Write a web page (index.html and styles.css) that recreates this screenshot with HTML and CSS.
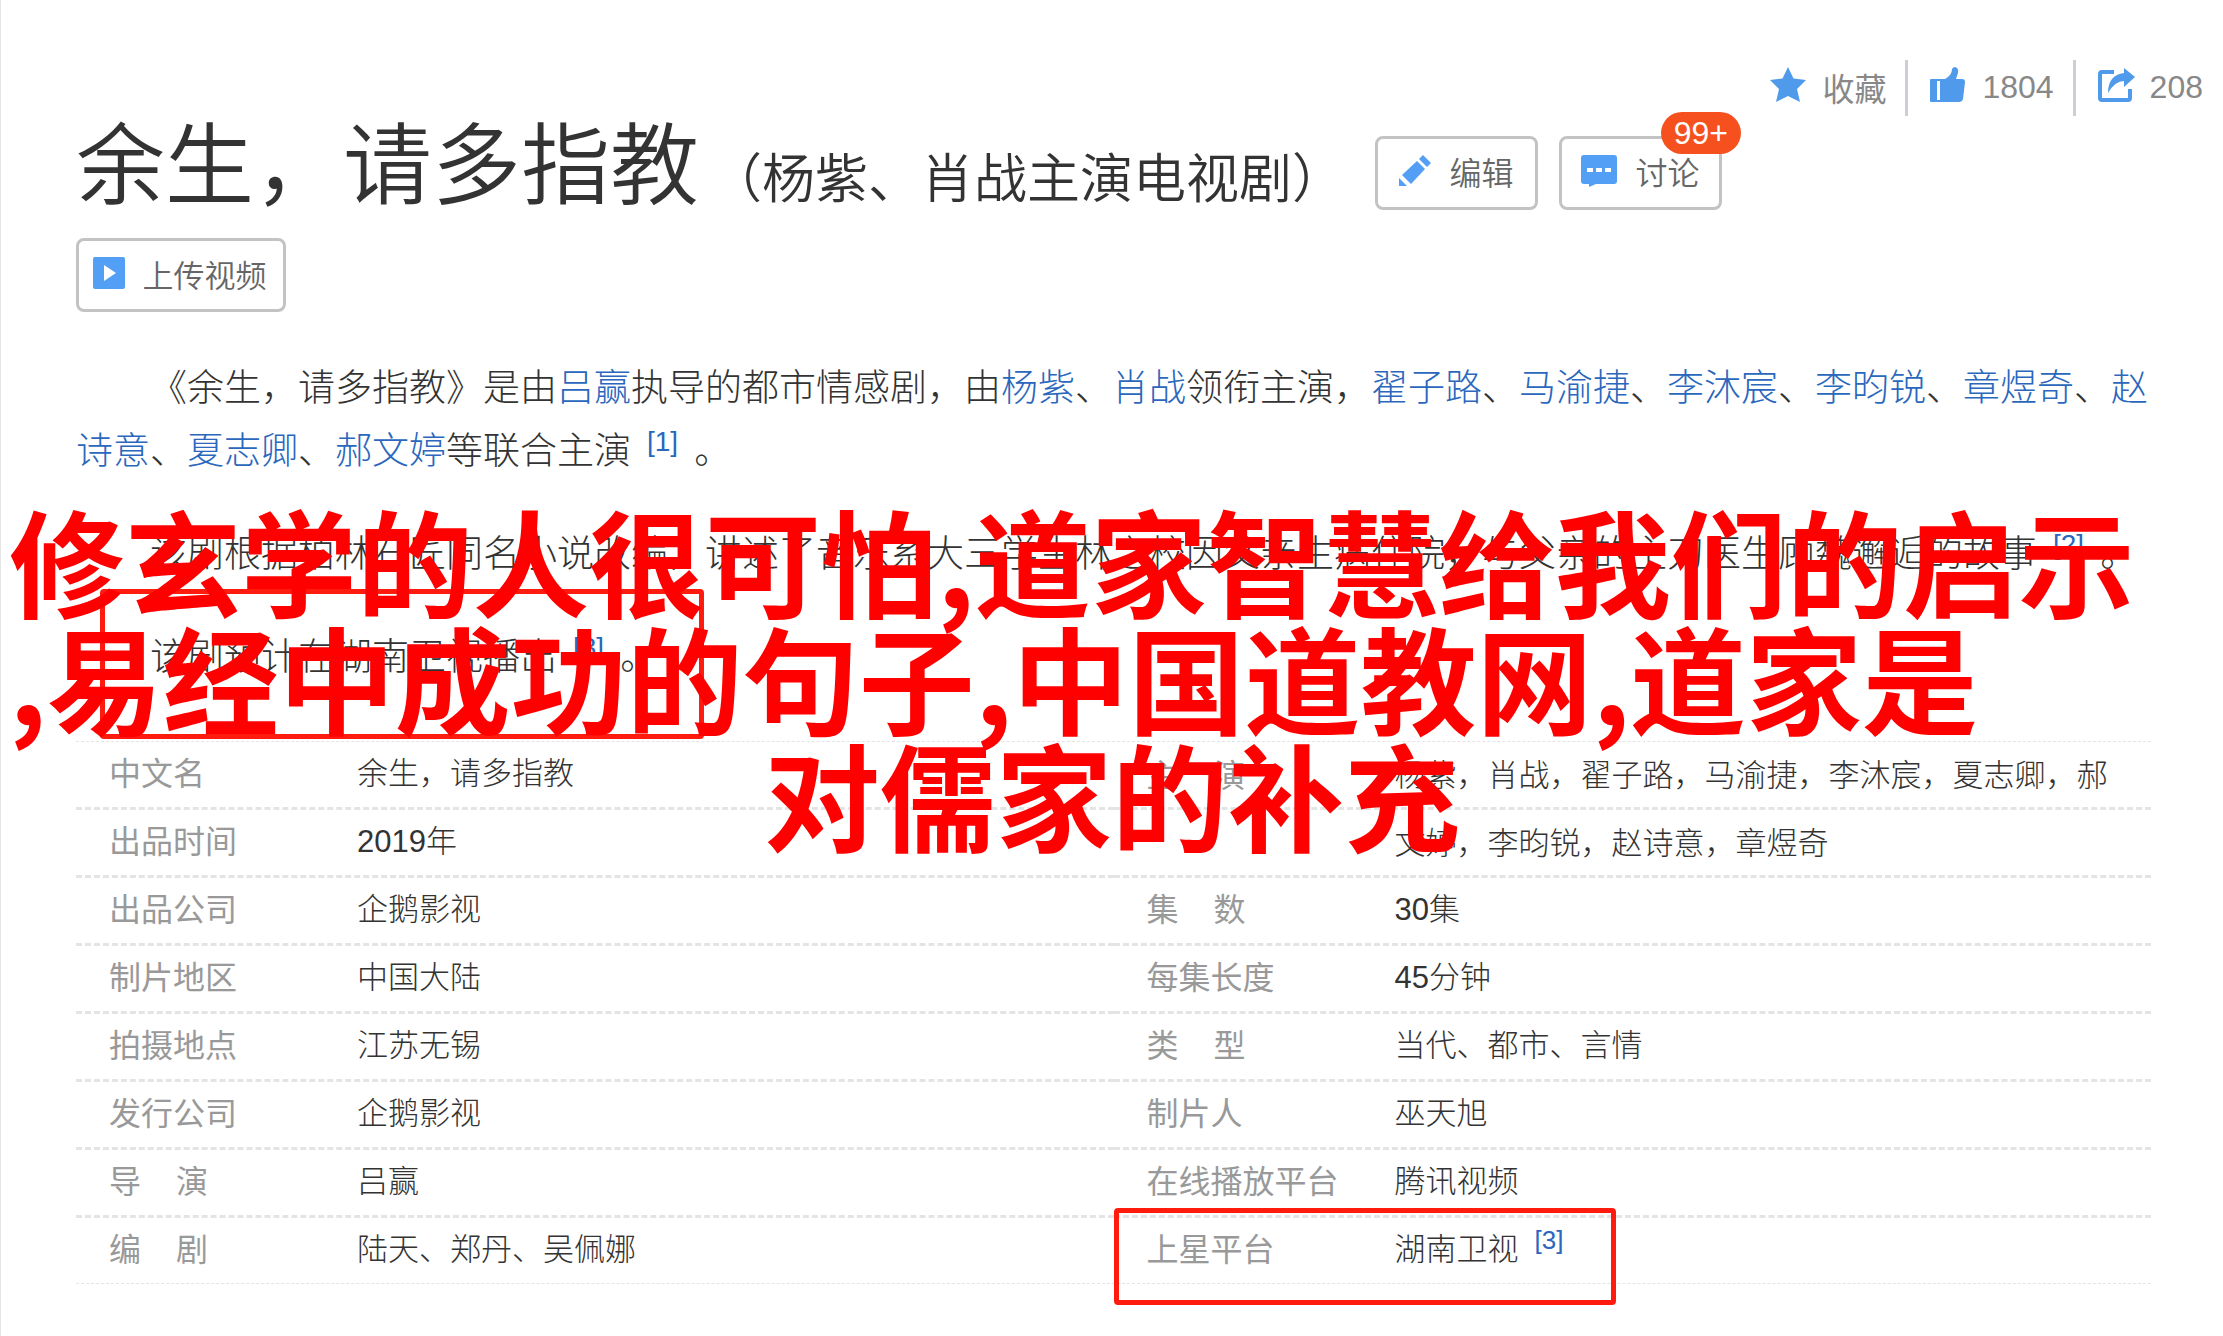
FILE: index.html
```html
<!DOCTYPE html>
<html lang="zh-CN">
<head>
<meta charset="UTF-8">
<meta name="viewport" content="width=device-width, initial-scale=1.0">
<title>余生,请多指教</title>
<link rel="stylesheet" href="styles.css">
</head>
<body>
<div class="page">
  <ul class="top-tool">
    <li>
      <a href="#">
        <svg class="tool-icon" viewBox="0 0 36 36"><path fill="#4f9aea" d="M18 0l5.500 11.500L36 13l-9 9 3 13-12-6-12 6 3-13-9-9 12.500-1.500z"/></svg>
        收藏
      </a>
    </li>
    <li>
      <a href="#">
        <svg class="tool-icon" viewBox="0 0 36 36"><path fill="#4f9aea" d="M1 12h14q7-4 7-10 1-2 3-2 4 1 3 6l-2 6h6q3 0 3 3l-2 17q-1 3-4 3H1q-1 0-1-1V13q0-1 1-1z"/><path fill="#fff" d="M7 14h3v19H7z"/></svg>
        1804
      </a>
    </li>
    <li>
      <a href="#">
        <svg class="tool-icon" viewBox="0 0 36 36"><path fill="none" stroke="#4f9aea" stroke-width="4" d="M16 5H4q-2 0-2 2v24q0 2 2 2h26q2 0 2-2v-9"/><path fill="#4f9aea" d="M26 1l11 9-11 10v-6q-9 0-16 12 0-18 16-20z"/></svg>
        208
      </a>
    </li>
  </ul>

  <div class="title-box">
    <h1>余生，请多指教</h1>
    <h2>（杨紫、肖战主演电视剧）</h2>
    <button type="button" class="btn">
      <svg class="btn-icon" viewBox="0 0 32 32"><path fill="#529ff5" d="M0 31v-8l8 8zM3 20L18 6l8 8-14 15zM20 4l4-4 8 8-4 4z"/></svg>
      编辑
    </button>
    <button type="button" class="btn">
      <svg class="btn-icon wide" viewBox="0 0 36 32"><path fill="#529ff5" d="M3 0h30q3 0 3 3v23q0 3-3 3H15l-7 3v-3H3q-3 0-3-3V3q0-3 3-3z"/><path fill="#fff" d="M6 13h6v4H6zM15 13h6v4h-6zM24 13h6v4h-6z"/></svg>
      讨论
      <span class="badge">99+</span>
    </button>
  </div>
  <button type="button" class="btn upload">
    <svg class="btn-icon" viewBox="0 0 32 32"><rect width="32" height="32" rx="2" fill="#529ff5"/><path fill="#fff" d="M11 8l12 8-12 8z"/></svg>
    上传视频
  </button>

  <div class="summary">
    <p>《余生，请多指教》是由<a href="#">吕赢</a>执导的都市情感剧，由<a href="#">杨紫</a>、<a href="#">肖战</a>领衔主演，<a href="#">翟子路</a>、<a href="#">马渝捷</a>、<a href="#">李沐宸</a>、<a href="#">李昀锐</a>、<a href="#">章煜奇</a>、<a href="#">赵诗意</a>、<a href="#">夏志卿</a>、<a href="#">郝文婷</a>等联合主演<sup><a href="#">[1]</a></sup>。</p>
    <p>该剧根据柏林石匠同名小说改编，讲述了音乐系大三学生林之校因父亲生病住院，与父亲的主刀医生顾魏邂逅的故事<sup><a href="#">[2]</a></sup>。</p>
    <p class="marked"><span class="mark"></span>该剧预计在湖南卫视播出<sup><a href="#">[3]</a></sup>。</p>
  </div>

  <div class="basic-info">
    <dl>
      <div class="row"><dt>中文名</dt><dd>余生，请多指教</dd></div>
      <div class="row"><dt>出品时间</dt><dd>2019年</dd></div>
      <div class="row"><dt>出品公司</dt><dd>企鹅影视</dd></div>
      <div class="row"><dt>制片地区</dt><dd>中国大陆</dd></div>
      <div class="row"><dt>拍摄地点</dt><dd>江苏无锡</dd></div>
      <div class="row"><dt>发行公司</dt><dd>企鹅影视</dd></div>
      <div class="row"><dt class="two"><span>导</span><span>演</span></dt><dd>吕赢</dd></div>
      <div class="row"><dt class="two"><span>编</span><span>剧</span></dt><dd>陆天、郑丹、吴佩娜</dd></div>
    </dl>
    <dl>
      <div class="row double"><dt class="two"><span>主</span><span>演</span></dt><dd>杨紫，肖战，翟子路，马渝捷，李沐宸，夏志卿，郝文婷，李昀锐，赵诗意，章煜奇</dd></div>
      <div class="row"><dt class="two"><span>集</span><span>数</span></dt><dd>30集</dd></div>
      <div class="row"><dt>每集长度</dt><dd>45分钟</dd></div>
      <div class="row"><dt class="two"><span>类</span><span>型</span></dt><dd>当代、都市、言情</dd></div>
      <div class="row"><dt>制片人</dt><dd>巫天旭</dd></div>
      <div class="row"><dt>在线播放平台</dt><dd>腾讯视频</dd></div>
      <div class="row marked"><span class="mark"></span><dt>上星平台</dt><dd>湖南卫视<sup><a href="#">[3]</a></sup></dd></div>
    </dl>
  </div>

  <div class="headline">
    <span>修玄学的人很可怕,道家智慧给我们的启示</span>
    <span>,易经中成功的句子,中国道教网,道家是</span>
    <span class="last">对儒家的补充</span>
  </div>
</div>
</body>
</html>
```
FILE: styles.css
```css
* {
  box-sizing: border-box;
}
body {
  margin: 0;
  background: #fff;
  color: #333;
  font-family: "Liberation Sans", "Noto Sans CJK SC", sans-serif;
}
a {
  color: #2a67bd;
  text-decoration: none;
}
.page {
  position: relative;
  min-height: 100vh;
  padding: 60px 72px 24px 75px;
  border-left: 1px solid #e4e4e4;
}

/* 右上角工具栏 */
.top-tool {
  display: flex;
  justify-content: flex-end;
  margin: 0 -52px 0 0;
  padding: 0;
  list-style: none;
}
.top-tool li {
  height: 56px;
  padding: 0 19px 0 22px;
  border-left: 3px solid #ccd0d6;
}
.top-tool li:first-child {
  border-left: 0;
}
.top-tool li:last-child {
  padding-right: 0;
}
.top-tool a {
  display: flex;
  align-items: center;
  gap: 16px;
  height: 54px;
  color: #888;
  font-size: 32px;
}
.tool-icon {
  width: 36px;
  height: 36px;
  margin-bottom: 4px;
  overflow: visible;
}

/* 标题 */
.title-box {
  display: flex;
  align-items: flex-end;
  height: 94px;
}
h1,
h2 {
  margin: 0;
  font-weight: 350;
  white-space: nowrap;
}
h1 {
  font-size: 89px;
  line-height: 88px;
}
h2 {
  margin: 0 30px 0 10px;
  font-size: 53px;
  line-height: 60px;
}
.btn {
  position: relative;
  display: flex;
  flex: none;
  align-items: center;
  justify-content: center;
  gap: 18px;
  width: 163px;
  height: 74px;
  margin-right: 21px;
  padding: 0 0 4px;
  border: 3px solid #c3c3c3;
  border-radius: 8px;
  background: #fff;
  color: #666;
  font-family: inherit;
  font-size: 32px;
  font-weight: 350;
}
.btn-icon {
  width: 32px;
  height: 32px;
}
.btn-icon.wide {
  width: 36px;
}
.upload {
  width: 210px;
  margin-top: 28px;
  padding-right: 3px;
  font-size: 31px;
}
.badge {
  position: absolute;
  top: -27px;
  right: -22px;
  padding: 0 13px;
  border-radius: 21px;
  background: #f5501e;
  color: #fff;
  font-size: 32px;
  line-height: 42px;
}

/* 简介 */
.summary {
  margin-top: 45px;
  font-size: 37px;
  font-weight: 300;
  line-height: 63px;
}
.summary p {
  margin: 0 0 40px;
  text-indent: 2em;
}
.summary p:last-child {
  margin-bottom: 52px;
}
sup {
  margin: 0 16px;
  font-size: 28px;
  line-height: 0;
}
.marked {
  position: relative;
}
.mark {
  position: absolute;
  border: 5px solid #ff1c0e;
  border-radius: 4px;
}
.summary .mark {
  top: -37px;
  left: 24px;
  width: 604px;
  height: 150px;
}

/* 基本信息 */
.basic-info {
  display: grid;
  grid-template-columns: 1fr 1fr;
  border-top: 1px dashed #e4e4e4;
  border-bottom: 1px dashed #e4e4e4;
}
.basic-info dl {
  margin: 0;
}
.row {
  display: flex;
  height: 68px;
  padding-left: 33px;
  border-bottom: 3px dashed #e4e4e4;
  line-height: 64px;
  font-size: 31px;
  font-weight: 300;
}
.row:last-child {
  height: 65px;
  border-bottom: 0;
}
.row.double {
  position: relative;
  height: 136px;
  line-height: 68px;
}
/* 两行之间的虚线 */
.row.double::after {
  content: "";
  position: absolute;
  top: 65px;
  left: 0;
  right: 0;
  border-top: 3px dashed #e4e4e4;
}
dt {
  flex: none;
  width: 248px;
  color: #999;
  font-size: 32px;
  font-weight: 400;
}
.two {
  display: flex;
  gap: 35px;
}
dd {
  margin: 0;
  padding-right: 32px;
}
.row sup {
  font-size: 26px;
}
.row .mark {
  top: -10px;
  left: 0;
  width: 502px;
  height: 97px;
}

/* 红色大标题 */
.headline {
  position: absolute;
  top: 500px;
  left: 8px;
  right: 8px;
  color: #f00;
  font-family: "Noto Sans CJK SC", sans-serif;
  font-size: 116px;
  font-weight: 700;
  line-height: 117px;
}
.headline span {
  display: block;
  white-space: nowrap;
}
.headline .last {
  text-align: center;
}
```
